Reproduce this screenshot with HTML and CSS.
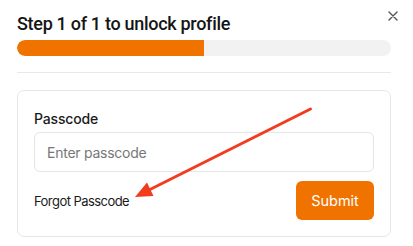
FILE: index.html
```html
<!DOCTYPE html>
<html>
<head>
<meta charset="utf-8">
<link rel="stylesheet" href="styles.css">
</head>
<body>
<div class="modal">
  <button class="close" aria-label="Close">
    <svg width="10" height="10" viewBox="0 0 10 10"><path d="M1 1L9 9M9 1L1 9" stroke="#555" stroke-width="1.4" stroke-linecap="round"/></svg>
  </button>
  <h1 class="title">Step 1 of 1 to unlock profile</h1>
  <div class="progress"><div class="progress-fill" style="width:50%"></div></div>
  <hr class="divider">
  <div class="card">
    <label class="label" for="pc">Passcode</label>
    <input class="input" id="pc" type="text" placeholder="Enter passcode">
    <div class="row">
      <a class="forgot">Forgot Passcode</a>
      <button class="submit">Submit</button>
    </div>
  </div>
  <svg class="arrow" width="413" height="246" viewBox="0 0 413 246">
    <line x1="310.5" y1="109" x2="149" y2="190" stroke="#f23c1e" stroke-width="3" stroke-linecap="round"/>
    <polygon points="135,197 153.5,196 147,182.5" fill="#f23c1e"/>
  </svg>
</div>
</body>
</html>
```
FILE: styles.css
```css
* { box-sizing: border-box; }
html, body { margin: 0; padding: 0; background: #fff; }
body { font-family: Inter, "Noto Sans", sans-serif; color: #1a1a1a; width: 413px; height: 246px; overflow: hidden; }
.modal { position: relative; padding: 12px 22px 0 17px; height: 246px; }
.close { position: absolute; top: 10px; right: 14px; width: 12px; height: 12px; padding: 1px; border: 0; background: none; display: flex; align-items: center; justify-content: center; }
.title { margin: 0; font-family: Roboto, Inter, sans-serif; font-size: 18px; line-height: 24px; font-weight: 500; letter-spacing: -0.3px; color: #151515; }
.progress { margin-top: 4px; height: 16px; border-radius: 8px; background: #f2f2f2; overflow: hidden; }
.progress-fill { height: 100%; background: #f07300; border-radius: 8px 0 0 8px; }
.divider { margin: 16px 0 0; border: 0; height: 1px; background: #e8e8e8; }
.card { margin-top: 17px; border: 1px solid #e6e6e6; border-radius: 7px; padding: 18px 16px 16px; display: flex; flex-direction: column; }
.label { font-size: 14px; line-height: 20px; font-weight: 500; letter-spacing: -0.15px; color: #1a1a1a; }
.input { margin-top: 3px; height: 40px; width: 100%; border: 1px solid #e6e6e6; border-radius: 6px; padding: 0 12px; font-family: inherit; font-size: 14px; letter-spacing: -0.25px; color: #222; outline: none; }
.input::placeholder { color: #777; }
.row { margin-top: 9px; display: flex; align-items: center; justify-content: space-between; }
.forgot { font-size: 13px; letter-spacing: -0.55px; color: #1a1a1a; }
.submit { height: 39px; width: 78px; border: 0; border-radius: 6px; background: #f07300; color: #fff; font-family: inherit; font-size: 14.5px; }
.arrow { position: absolute; left: 0; top: 0; pointer-events: none; }
```
